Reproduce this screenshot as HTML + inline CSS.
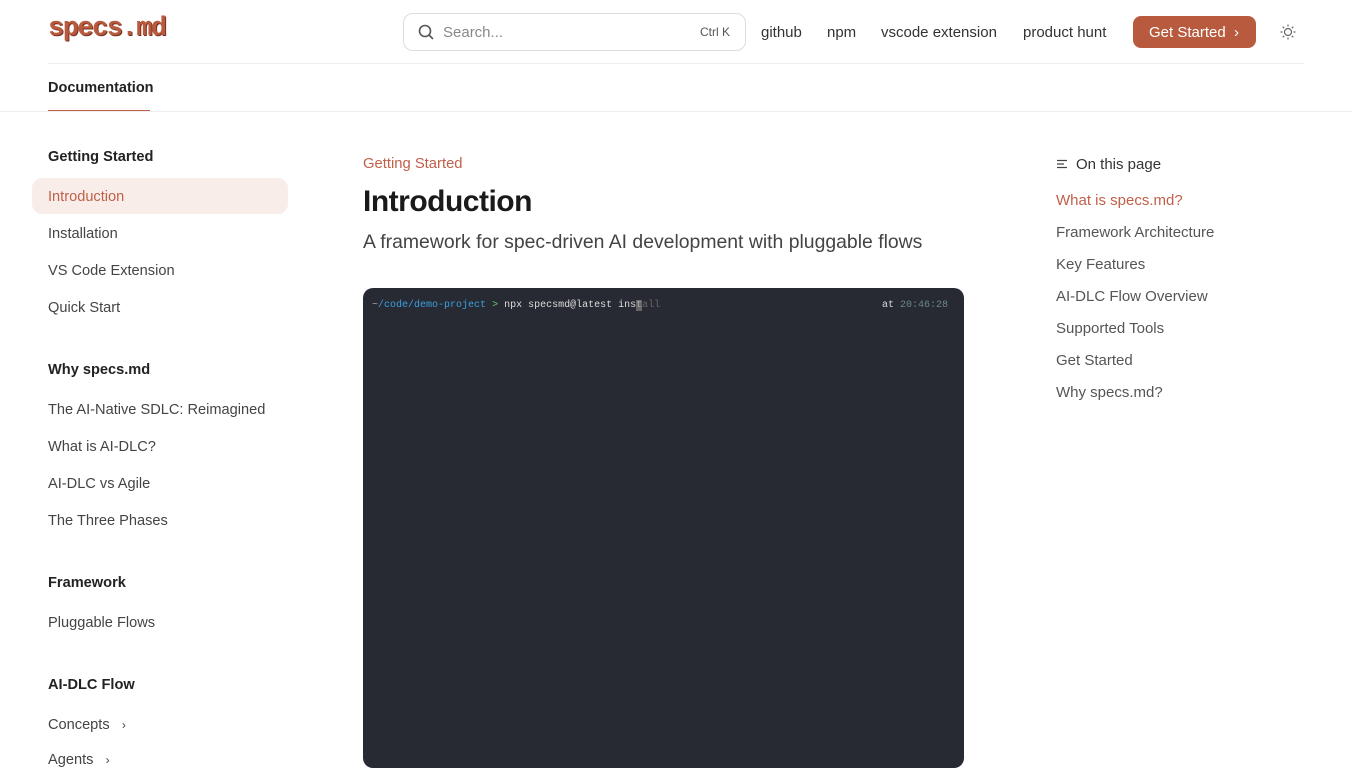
<!DOCTYPE html>
<html><head><meta charset="utf-8"><style>
*{box-sizing:border-box;margin:0;padding:0}
body{width:1352px;height:760px;overflow:hidden;background:#fff;font-family:"Liberation Sans",sans-serif;color:#222;position:relative}
.a{position:absolute;white-space:nowrap}
.logo{left:48px;top:14px;font-family:"Liberation Mono",monospace;font-weight:bold;font-size:27px;color:#b85a3e;letter-spacing:-1.5px;text-shadow:1px 1px 0 #7a3020}
.search{left:403px;top:13px;width:343px;height:38px;border:1px solid #ddd;border-radius:10px}
.nav{top:24px;font-size:15px;color:#333}
.btn{left:1133px;top:16px;width:123px;height:32px;border-radius:8px;background:#b85a3e;color:#fff;font-size:15px;padding:8px 0 0 16px}
.sb{left:48px;font-size:14.6px;color:#444}
.h{font-weight:bold;color:#222}
.toc{left:1056px;font-size:15px;color:#555}
.term{left:363px;top:288px;width:601px;height:480px;background:#282a33;border-radius:10px}
.mono{font-family:"Liberation Mono",monospace;font-size:10px}
</style></head><body>
<div class="a logo">specs.md</div>
<div class="a search"><svg class="a" style="left:14px;top:10px" width="16" height="16" viewBox="0 0 16 16" fill="none" stroke="#555" stroke-width="1.6"><circle cx="7" cy="7" r="5.5"/><path d="M11 11l4 4"/></svg><span class="a" style="left:39px;top:10px;font-size:15px;color:#888">Search...</span><span class="a" style="left:296px;top:11px;font-size:12px;color:#555">Ctrl K</span></div>
<div class="a nav" style="left:761px">github</div>
<div class="a nav" style="left:827px">npm</div>
<div class="a nav" style="left:881px">vscode extension</div>
<div class="a nav" style="left:1023px">product hunt</div>
<div class="a btn">Get Started &nbsp;›</div>
<svg class="a" style="left:1280px;top:24px" width="16" height="16" viewBox="0 0 16 16" fill="none" stroke="#666" stroke-width="1.2"><circle cx="8" cy="8" r="3.5"/><path d="M8 0.5v2M8 13.5v2M0.5 8h2M13.5 8h2M2.7 2.7l1.4 1.4M11.9 11.9l1.4 1.4M2.7 13.3l1.4-1.4M11.9 4.1l1.4-1.4"/></svg>
<div class="a" style="left:48px;top:63px;width:1256px;border-top:1px solid #eee"></div>
<div class="a" style="left:48px;top:80px;font-size:14.5px;font-weight:bold;color:#222">Documentation</div>
<div class="a" style="left:48px;top:110px;width:102px;border-top:1px solid #c0604a"></div>
<div class="a" style="left:0;top:111px;width:1352px;border-top:1px solid #eee"></div>
<div class="a sb h" style="top:149px">Getting Started</div>
<div class="a" style="left:32px;top:178px;width:256px;height:36px;background:#f9ede9;border-radius:10px"></div>
<div class="a sb" style="top:189px;color:#c0604a">Introduction</div>
<div class="a sb" style="top:226px">Installation</div>
<div class="a sb" style="top:263px">VS Code Extension</div>
<div class="a sb" style="top:300px">Quick Start</div>
<div class="a sb h" style="top:362px">Why specs.md</div>
<div class="a sb" style="top:402px">The AI-Native SDLC: Reimagined</div>
<div class="a sb" style="top:439px">What is AI-DLC?</div>
<div class="a sb" style="top:476px">AI-DLC vs Agile</div>
<div class="a sb" style="top:513px">The Three Phases</div>
<div class="a sb h" style="top:575px">Framework</div>
<div class="a sb" style="top:615px">Pluggable Flows</div>
<div class="a sb h" style="top:677px">AI-DLC Flow</div>
<div class="a sb" style="top:717px">Concepts &nbsp;&nbsp;<span style="font-size:12px">›</span></div>
<div class="a sb" style="top:752px">Agents &nbsp;&nbsp;<span style="font-size:12px">›</span></div>
<div class="a" style="left:363px;top:156px;font-size:14.8px;color:#c0604a">Getting Started</div>
<div class="a" style="left:363px;top:185px;font-size:30px;font-weight:bold;color:#1a1a1a;letter-spacing:-0.5px">Introduction</div>
<div class="a" style="left:363px;top:231px;font-size:19.4px;color:#444">A framework for spec-driven AI development with pluggable flows</div>
<div class="a term"><div class="a mono" style="left:9px;top:12px;color:#ddd"><span style="color:#aaa">~</span><span style="color:#3aa0e0">/code/demo-project</span> <span style="color:#6c6">&gt;</span> npx specsmd@latest ins<span style="background:#666;color:#aaa">t</span><span style="color:#666">all</span></div><div class="a mono" style="left:519px;top:12px;color:#ddd">at <span style="color:#6a8a8a">20:46:28</span></div></div>
<svg class="a" style="left:1056px;top:158px" width="12" height="12" viewBox="0 0 12 12" stroke="#444" stroke-width="1.3"><path d="M1 2.5h10M1 6h7M1 9.5h10"/></svg>
<div class="a" style="left:1076px;top:156px;font-size:15px;color:#333">On this page</div>
<div class="a toc" style="top:192px;color:#c0604a">What is specs.md?</div>
<div class="a toc" style="top:224px">Framework Architecture</div>
<div class="a toc" style="top:256px">Key Features</div>
<div class="a toc" style="top:288px">AI-DLC Flow Overview</div>
<div class="a toc" style="top:320px">Supported Tools</div>
<div class="a toc" style="top:352px">Get Started</div>
<div class="a toc" style="top:384px">Why specs.md?</div>
</body></html>
